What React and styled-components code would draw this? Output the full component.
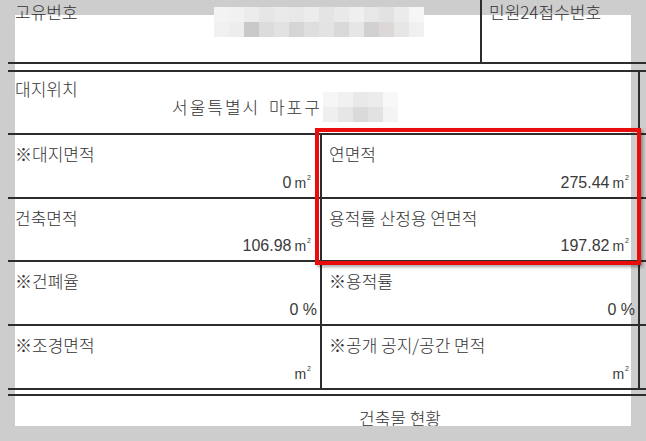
import styled, { createGlobalStyle } from 'styled-components';

const GlobalStyle = createGlobalStyle`
  html, body {
    margin: 0;
    padding: 0;
    background-color: #cdcdcd;
    overflow: hidden;
  }

  body {
    font-family: "Noto Sans CJK KR", "Noto Sans", sans-serif;
    font-weight: 300;
    color: #333333;
  }
`;

const LINE = '#2d2d2d';

const Viewport = styled.div`
  height: 426px;
  overflow: hidden;
`;

const Sheet = styled.div`
  position: relative;
  width: 784px;
  margin-left: 8px;
  background: linear-gradient(#ffffff, #ffffff) no-repeat;
  background-position: 7px 15px;
  background-size: 616px 411px;
`;

const TopRow = styled.div`
  display: flex;
  height: 64px;
  box-sizing: border-box;
  border-bottom: 2px solid ${LINE};
`;

const TopCell = styled.div`
  display: flex;
  align-items: flex-start;
  box-sizing: border-box;
  width: ${(props) => props.$width};
  padding: 2px 6px 0 7px;
  border-right: ${(props) => (props.$divider ? `2px solid ${LINE}` : 'none')};
`;

const Label = styled.span`
  font-size: 17px;
  font-weight: 300;
  line-height: 20px;
  white-space: nowrap;
  color: #333333;
  letter-spacing: ${(props) => props.$spacing || 0};
  word-spacing: ${(props) => props.$wordSpacing || 0};
`;

const Mosaic = styled.div`
  display: grid;
  grid-template-columns: repeat(${(props) => props.$cols}, 15px);
  grid-auto-rows: 15px;
  margin: ${(props) => props.$margin || '0'};
`;

const Tile = styled.div`
  background-color: ${(props) => props.$color};
`;

const Table = styled.div`
  margin-top: 6px;
  border-top: 2px solid ${LINE};
`;

const Row = styled.div`
  display: flex;
  box-sizing: border-box;
  height: ${(props) => props.$height}px;
  border-bottom: 2px solid ${LINE};
`;

const Cell = styled.div`
  display: flex;
  flex-direction: column;
  justify-content: ${(props) => (props.$top ? 'flex-start' : 'space-between')};
  box-sizing: border-box;
  width: ${(props) => props.$width}px;
  flex: ${(props) => (props.$width ? 'none' : '1')};
  padding: ${(props) => props.$padding || '9px 3px 4px 7px'};
  border-right: ${(props) => (props.$divider ? `2px solid ${LINE}` : 'none')};
`;

const Address = styled.div`
  display: flex;
  align-items: center;
  margin: -7px 0 0 157px;
`;

const Value = styled.span`
  align-self: flex-end;
  font-family: "Liberation Sans", sans-serif;
  font-weight: 400;
  font-size: 16px;
  line-height: 20px;
  white-space: nowrap;
  color: #3a3a3a;
`;

const Unit = styled.span`
  font-size: 14px;
  margin: 0 6px 0 3px;

  sup {
    font-size: 7px;
    vertical-align: 8px;
    line-height: 0;
    margin-left: 1px;
  }
`;

const Footer = styled.div`
  margin-top: 4px;
  height: 40px;
  border-top: 2px solid ${LINE};
  padding-top: 10px;
  text-align: center;
`;

const Highlight = styled.div`
  position: absolute;
  left: 307px;
  top: 128px;
  width: 326px;
  height: 137px;
  box-sizing: border-box;
  border: 4px solid #e80c0c;
  box-shadow: 2px 2px 3px rgba(0, 0, 0, 0.35);
  pointer-events: none;
`;

const idTiles = [
  ['#f3f3f3', '#f1f1f1', '#ececec', '#e6e6e6', '#eaeaea', '#e8e8e8', '#ececec', '#e4e4e4', '#e9e9e9', '#efefef', '#e7e7e7', '#e2e2e2', '#ebebeb', '#f6f6f6'],
  ['#f0f0f0', '#ededed', '#c9c9c9', '#dcdcdc', '#e2e2e2', '#d5d5d5', '#dedede', '#e3e3e3', '#d9d9d9', '#e6e6e6', '#d1d1d1', '#dcd8d8', '#e6e6e6', '#f0f0f0'],
];

const addressTiles = [
  ['#f6f6f6', '#f1f1f1', '#e9e9e9', '#ececec', '#f8f8f8'],
  ['#efefef', '#e6e6e6', '#dadada', '#e2e2e2', '#f4f4f4'],
];

const rows = [
  {
    height: 64,
    cells: [
      { label: '※대지면적', value: '0', unit: true },
      { label: '연면적', value: '275.44', unit: true },
    ],
  },
  {
    height: 63,
    cells: [
      { label: '건축면적', value: '106.98', unit: true },
      { label: '용적률 산정용 연면적', value: '197.82', unit: true },
    ],
  },
  {
    height: 64,
    cells: [
      { label: '※건폐율', value: '0 %' },
      { label: '※용적률', value: '0 %' },
    ],
  },
  {
    height: 64,
    cells: [
      { label: '※조경면적', value: '', unit: true },
      { label: '※공개 공지/공간 면적', value: '', unit: true },
    ],
  },
];

function PixelBlur({ tiles, margin }) {
  return (
    <Mosaic $cols={tiles[0].length} $margin={margin}>
      {tiles.flat().map((color, i) => (
        <Tile key={i} $color={color} />
      ))}
    </Mosaic>
  );
}

export default function App() {
  return (
    <>
      <GlobalStyle />
      <Viewport>
        <Sheet>
          <TopRow>
            <TopCell $width="474px" $divider>
              <Label>고유번호</Label>
              <PixelBlur tiles={idTiles} margin="5px 0 0 136px" />
            </TopCell>
            <TopCell $width="310px">
              <Label>민원24접수번호</Label>
            </TopCell>
          </TopRow>

          <Table>
            <Row $height={63}>
              <Cell $width={632} $divider $top $padding="7px 3px 0 7px">
                <Label>대지위치</Label>
                <Address>
                  <Label $spacing="2px" $wordSpacing="3px">서울특별시 마포구</Label>
                  <PixelBlur tiles={addressTiles} margin="0 0 0 1px" />
                </Address>
              </Cell>
              <Cell />
            </Row>

            {rows.map((row, r) => (
              <Row key={r} $height={row.height}>
                {row.cells.map((cell, c) => (
                  <Cell key={c} $width={c === 0 ? 314 : 318} $divider>
                    <Label>{cell.label}</Label>
                    <Value>
                      {cell.value}
                      {cell.unit && (
                        <Unit>
                          m
                          <sup>2</sup>
                        </Unit>
                      )}
                    </Value>
                  </Cell>
                ))}
                <Cell />
              </Row>
            ))}
          </Table>

          <Footer>
            <Label>건축물 현황</Label>
          </Footer>

          <Highlight />
        </Sheet>
      </Viewport>
    </>
  );
}
